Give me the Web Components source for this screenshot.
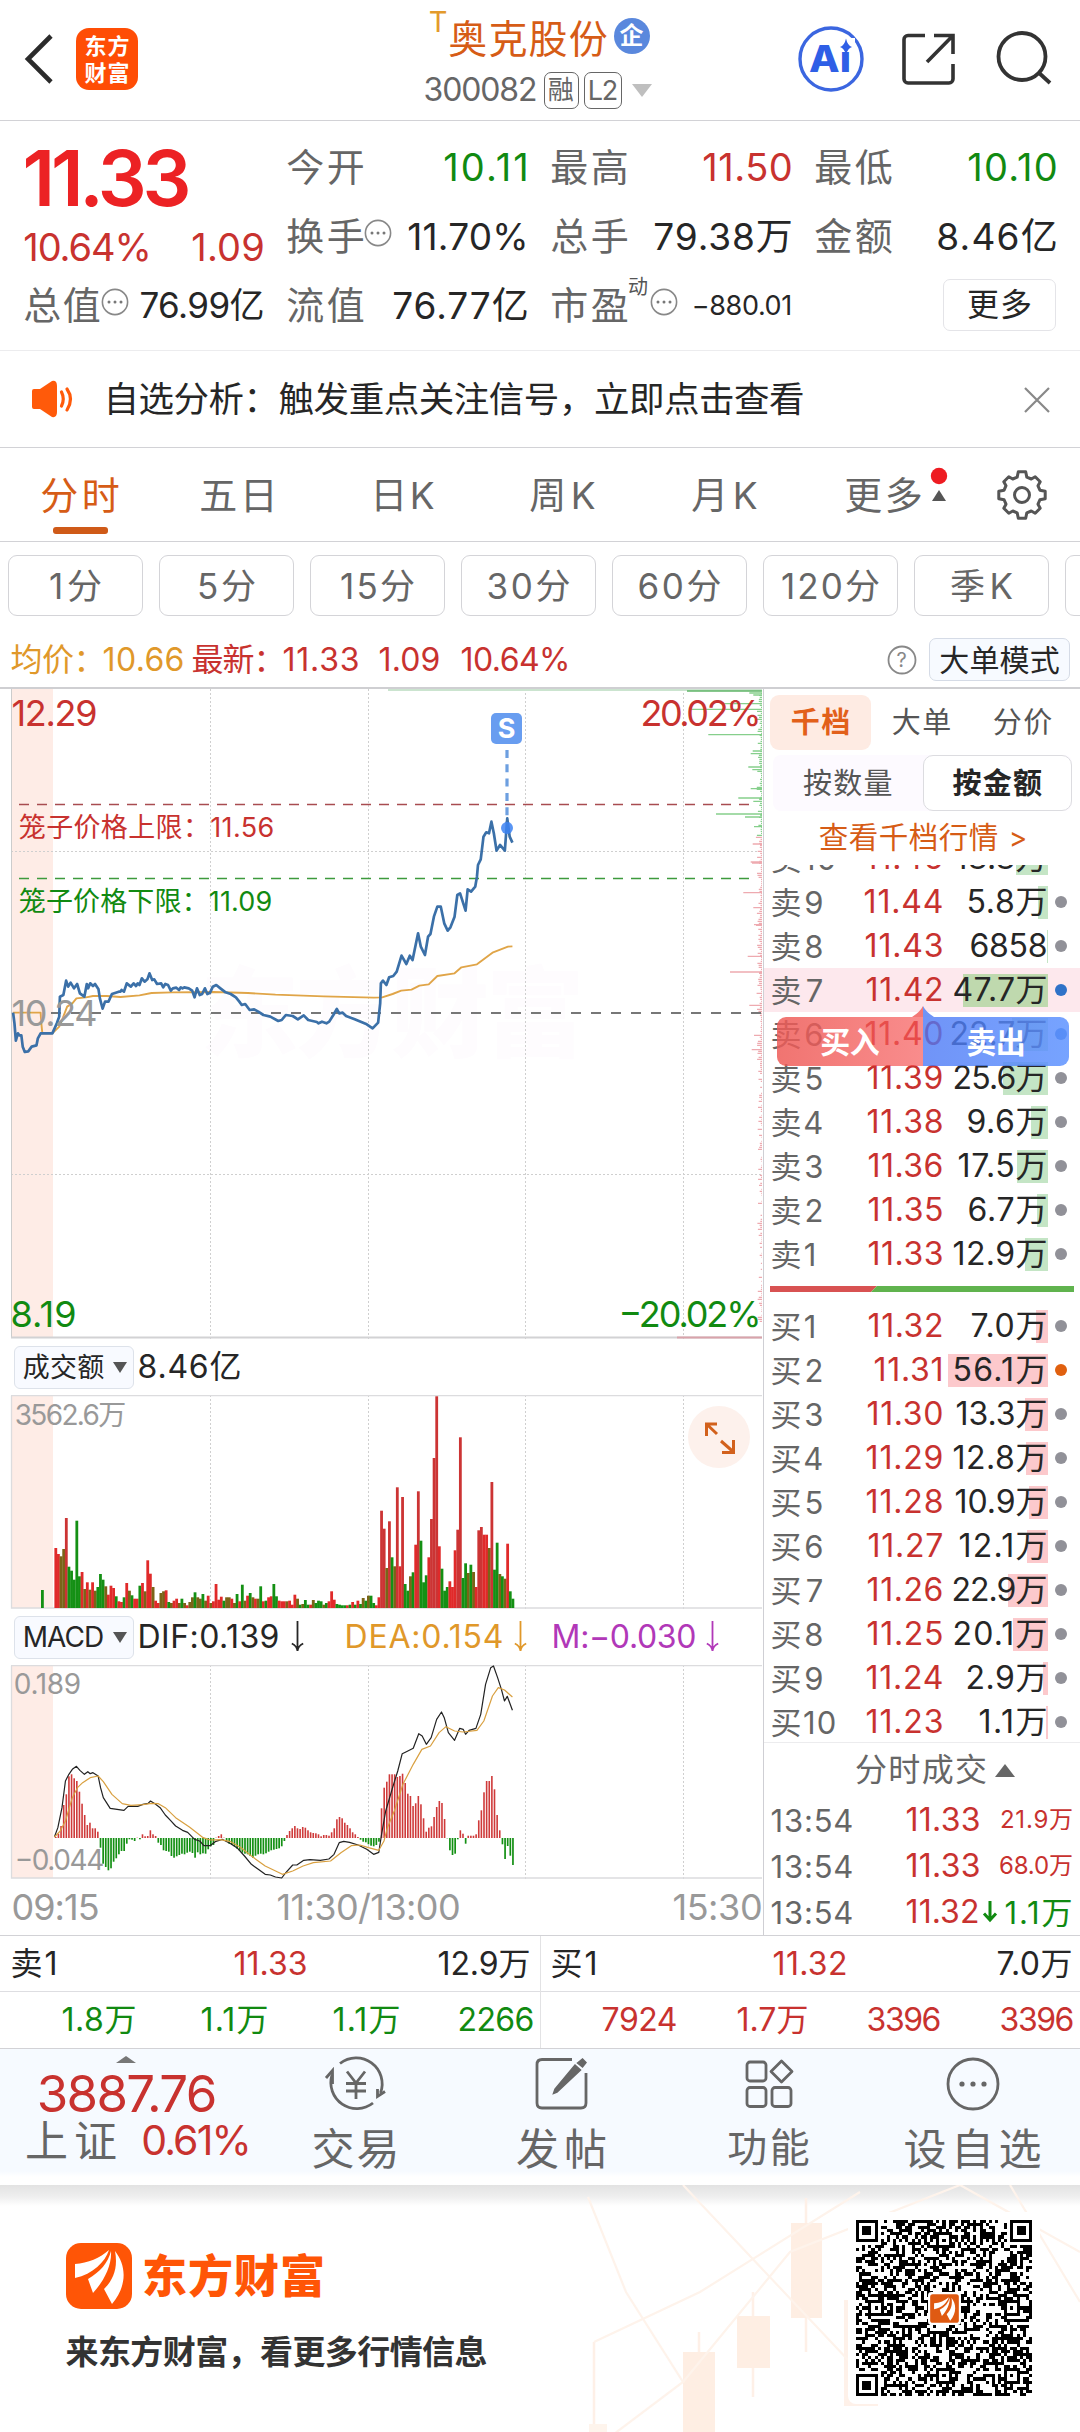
<!DOCTYPE html>
<html lang="zh-CN">
<head>
<meta charset="utf-8">
<title>奥克股份 300082</title>
<style>
html,body{margin:0;padding:0;background:#fff}
body{width:1080px;height:2432px;overflow:hidden;font-family:Inter,"Noto Sans CJK SC",sans-serif;color:#262626;
--up:#c8322f;--down:#118a11;--mut:#666;--line:#d2d2d6;--or:#d65c16}
</style>
</head>
<body>
<stock-page></stock-page>
<script>
const def=(n,c)=>customElements.define(n,c);
class Base extends HTMLElement{
  connectedCallback(){
    if(this.shadowRoot)return;
    this.attachShadow({mode:'open'}).innerHTML='<style>*{box-sizing:border-box}:host{display:block;box-sizing:border-box}svg{display:block;flex:none;overflow:visible}.r{display:flex;align-items:center}'+(this.css?this.css():'')+'</style>'+this.html();
  }
}
/* Label whose ink is spread to an exact width: w = width, s = font size, g = gap before, c = colour, b = weight */
def('fit-label',class extends HTMLElement{
  connectedCallback(){
    if(this.shadowRoot)return;
    const a=n=>this.getAttribute(n),s=+a('s'),w=+a('w');
    this.attachShadow({mode:'open'}).innerHTML=`<style>:host{display:block;flex:none;width:${w}px;margin-left:${a('g')||0}px;font-size:${s}px;line-height:${s}px;height:${s}px;color:${a('c')||'inherit'};font-weight:${a('b')||'inherit'};white-space:nowrap}
    span{display:inline-block;vertical-align:top;line-height:inherit;margin-left:-.045em}</style><span><slot></slot></span>`;
    const sp=this.shadowRoot.querySelector('span'),n=[...this.textContent].length;
    const nat=sp.getBoundingClientRect().width;
    if(n>1)sp.style.letterSpacing=((w+.09*s-nat)/(n-1)).toFixed(3)+'px';
  }
});
const L=(t,w,s,g=0,c='',b='')=>`<fit-label w="${w}" s="${s}" g="${g}"${c?` c="${c}"`:''}${b?` b="${b}"`:''}>${t}</fit-label>`;
const UP='var(--up)',DN='var(--down)',MU='var(--mut)',OR='var(--or)';
/* SVG text with a fixed ink width */
const T=(x,y,w,s,t,f,b=400)=>`<text x="${x-.045*s}" y="${y}" font-size="${s}" font-weight="${b}" fill="${f}" textLength="${(w+.09*s).toFixed(1)}">${t}</text>`;
const dots='<svg width="28" height="28" viewBox="-14 -14 28 28"><circle r="12.6" fill="none" stroke="#888" stroke-width="1.6"/><g fill="#777"><circle cx="-6" r="1.5"/><circle r="1.5"/><circle cx="6" r="1.5"/></g></svg>';
const brand=`<path d="M9 21C22 20 34 15 43 7C39 19 27 31 9 35Z"/><path d="M45 8C46 22 38 38 27 50L22 36C34 29 42 20 45 8Z"/><path d="M49 8C60 22 62 42 46 61L38 46C48 36 52 24 49 8Z"/>`;

def('app-header',class extends Base{
 css(){return `:host{height:121px;border-bottom:1.5px solid var(--line)}.bar{height:118px}
 .logo{width:62px;height:62px;border-radius:13px;background:#ff4d05;color:#fff;margin-left:20px;display:flex;flex-direction:column;align-items:center;justify-content:center;gap:5px}
 .mid{margin-left:287px;width:231px;height:118px;padding-top:12px}.mid .r{height:52px}.t{align-self:flex-start;margin-top:-5px}
 .e{width:36px;height:36px;border-radius:50%;background:#5a88dd;color:#fff;margin:-4px 0 0 8px;display:flex;align-items:center;justify-content:center}
 .bx{height:37px;border:1.6px solid #666;border-radius:7px;display:flex;align-items:center;justify-content:center;color:#666}`}
 html(){return `<div class="r bar"><svg style="margin-left:22px" width="34" height="60" viewBox="22 29 34 60"><path d="M51 36L28 59L51 82" fill="none" stroke="#2b2b2b" stroke-width="4.6"/></svg>
 <div class="logo">${L('东方',43,22,0,'','700')}${L('财富',43,22,0,'','700')}</div>
 <div class="mid"><div class="r"><div class="t">${L('T',17,29,5,'#e39a2c')}</div>${L('奥克股份',156,39,3,OR)}<div class="e">${L('企',23,24,0,'','700')}</div></div>
 <div class="r" style="color:#666">${L('300082',111,32)}<div class="bx" style="width:35px;margin-left:8px">${L('融',25,26)}</div><div class="bx" style="width:38px;margin-left:5px">${L('L2',28,27)}</div><svg style="margin-left:10px" width="20" height="13"><path d="M0 0H20L10 13Z" fill="#bfbfbf"/></svg></div></div>
 <svg style="margin-left:142px" width="66" height="66" viewBox="798 26 66 66"><circle cx="831" cy="59" r="31" fill="none" stroke="#3b66e0" stroke-width="3.4"/><text x="809" y="72" font-size="37" font-weight="800" fill="#2f5fe6" textLength="42" lengthAdjust="spacingAndGlyphs" font-family="Inter">Ai</text><path d="M839 38H855V51H839Z" fill="#fff"/><path d="M846 38.500Q847.500 45.500 852 47Q847.500 48.500 846 55Q844.500 48.500 840 47Q844.500 45.500 846 38.500Z" fill="#2f5fe6"/></svg>
 <svg style="margin-left:35px" width="60" height="60" viewBox="900 29 60 60"><g fill="none" stroke="#333" stroke-width="3.6"><path d="M926 35.500H909a4 4 0 0 0-4 4V79a4 4 0 0 0 4 4H950a4 4 0 0 0 4-4V64"/><path d="M928 62L953 36.500M935 35.500H954V54"/></g></svg>
 <svg style="margin-left:36px" width="60" height="60" viewBox="996 29 60 60"><g fill="none" stroke="#333" stroke-width="3.8"><circle cx="1023" cy="56.500" r="23.500"/><path d="M1039 72L1051 83"/></g></svg></div>`}
});

def('quote-board',class extends Base{
 css(){return `:host{height:230px;border-bottom:1.5px solid #ececee;padding:11.500px 0 0 25px}
 .g{display:grid;grid-template-columns:238px 239px 239px 240px;column-gap:25px;grid-template-rows:69px 69px 69px}
 .c{display:flex;align-items:center}.c>:last-child{margin-left:auto}.big{grid-row:1/3;padding:7px 0 0 1px}.big .r{justify-content:space-between;margin:11px 0 0 -1px}
 .sup{align-self:flex-start;margin-top:6px}.btn{width:113px;height:52px;border:1.6px solid #e4e4e8;border-radius:7px;display:flex;align-items:center;justify-content:center}`}
 html(){const c=(k,kw,x,v)=>`<div class="c">${L(k,kw,38,0,MU)}${x}${v}</div>`;
 return `<div class="g"><div class="big">${L('11.33',162,77,0,'#ec2224','600')}<div class="r">${L('10.64%',125,38,0,UP)}${L('1.09',70,38,0,UP)}</div></div>
 ${c('今开',75,'',L('10.11',82,38,0,DN))}${c('最高',75,'',L('11.50',87,38,0,UP))}${c('最低',75,'',L('10.10',87,38,0,DN))}
 ${c('换手',75,`<div style="margin:-6px 0 0 1px">${dots}</div>`,L('11.70%',118,37))}${c('总手',75,'',L('79.38万',136,37))}${c('金额',75,'',L('8.46亿',118,37))}
 ${c('总值',74,`<div style="margin:-6px 0 0 2px">${dots}</div>`,L('76.99亿',122,35))}${c('流值',75,'',L('76.77亿',133,37))}
 ${c('市盈',75,`<div class="sup">${L('动',19,20,2,'#555')}</div><div style="margin:-6px 0 0 2px">${dots}</div>`,L('−880.01',98,27))}
 <div class="c"><div class="btn">${L('更多',62,32)}</div></div></div>`}
});

def('notice-bar',class extends Base{
 css(){return `:host{height:97px;border-bottom:1.5px solid var(--line);display:flex;align-items:center;padding:1px 30px 0 30px}.x{margin-left:auto}`}
 html(){return `<svg width="44" height="36" viewBox="30 380 44 36"><g fill="#ff5a0a"><path d="M32 389Q32 387 34 387H40L52 379Q57 378 57 384V410Q57 416 52 415L40 407H34Q32 407 32 405Z"/></g><g fill="none" stroke="#ff5a0a" stroke-width="3.200" stroke-linecap="round"><path d="M61.500 390Q65 397 61.500 404"/><path d="M67 387Q74 397 67 408"/></g></svg>
 ${L('自选分析：触发重点关注信号，立即点击查看',698,35.5,31)}<svg class="x" width="26" height="26"><path d="M1 1L25 25M25 1L1 25" stroke="#888" stroke-width="2.200"/></svg>`}
});

def('chart-tabs',class extends Base{
 css(){return `:host{height:94px;border-bottom:1.5px solid var(--line);color:#666}.r{height:94px;position:relative;padding-left:42px}
 .on{display:flex;flex-direction:column;align-items:center;padding-top:28px;align-self:flex-start}.on i{width:55px;height:7px;border-radius:3px;background:#cf5a18;margin-top:13px}
 .mk{width:18px;height:94px;margin-left:9px}`}
 html(){const cog=[];for(let i=0;i<8;i++){const a=i*45-90,p=(r,d)=>{const t=(a+d)*Math.PI/180;return (r*Math.cos(t)).toFixed(1)+' '+(r*Math.sin(t)).toFixed(1)};const R=i%2?22.5:23.5;cog.push(p(18.5,-15),p(R,-9),p(R,9),p(18.5,15))}
 return `<div class="r"><div class="on">${L('分时',76,38,0,OR)}<i></i></div>${L('五日',75,38,83)}${L('日K',61,37,96)}${L('周K',63,37,98)}${L('月K',63,37,99)}${L('更多',75,38,90)}
 <svg class="mk" viewBox="931 447 18 94"><circle cx="940" cy="475" r="8.200" fill="#ee1c22"/><path d="M933 500L940 489L947 500Z" fill="#555"/></svg>
 <svg style="margin-left:48px" width="52" height="52" viewBox="-26 -26 52 52"><path d="M${cog.join('L')}Z" fill="none" stroke="#555" stroke-width="3" stroke-linejoin="round"/><circle r="7.500" fill="none" stroke="#555" stroke-width="3"/></svg></div>`}
});

def('period-chips',class extends Base{
 css(){return `:host{height:81px;padding:13px 0 0 8px;overflow:hidden}.w{display:flex;gap:16px;width:1230px}.c{width:135px;height:61px;border:1.600px solid #d4d4d8;border-radius:9px;display:flex;align-items:center;justify-content:center;color:#666;padding-top:1.500px}`}
 html(){return `<div class="w">${[['1分',50],['5分',56],['15分',72],['30分',81],['60分',81],['120分',96],['季K',60]].map(a=>`<div class="c">${L(a[0],a[1],35)}</div>`).join('')}<div class="c"></div></div>`}
});

def('price-info',class extends Base{
 css(){return `:host{height:66px;border-bottom:2px solid #cfcfd2;display:flex;align-items:center;padding:9px 10px 0 12px}.q{margin-left:auto}
 .b{width:141px;height:43px;border:1.500px solid #d5dbe6;border-radius:7px;background:#f7faff;margin-left:12px;display:flex;align-items:center;justify-content:center}`}
 html(){return `${L('均价：',92,32,0,'#e0982a')}${L('10.66',79,32,0,'#e0982a')}${L('最新：',91,32,10,UP)}${L('11.33',74,32,0,UP)}${L('1.09',59,32,22,UP)}${L('10.64%',107,32,23,UP)}
 <svg class="q" width="30" height="30" viewBox="-15 -15 30 30"><circle r="13.500" fill="none" stroke="#888" stroke-width="1.800"/><text x="-5.500" y="7" font-size="20" fill="#888">?</text></svg><div class="b">${L('大单模式',118,30)}</div>`}
});

const VG='<path d="M210.500 0V700M368.500 0V700M525.500 0V700M683.500 0V700" stroke="#cfcfcf" stroke-dasharray="2 2" fill="none"/>';
const clip=(id,h)=>`<clipPath id="${id}"><rect width="763" height="${h}"/></clipPath>`;

def('price-chart',class extends Base{
 html(){
  const fix=[[8,1108],[14,1120],[40,1030],[57,930],[133,985],[182,1118],[190,1112],[230,1105],[238,1117],[295,1112],[323,1075],[333,1120],[371,1008],[380,1095],[409,1122],[461,1118],[515,1112],[518,1116],[607,1090],[652,1120],[703,1122],[798,1103],[845,1050],[945,1108],[1035,1122],[1078,1115]];
  let g='',r='',s=7;const rnd=()=>(s=(s*16807)%2147483647)/2147483647;
  for(let y=4;y<1900;y+=6){const w=(rnd()*rnd()*14+(y>1150?1:2))/3*1.2,p=`M762 ${(y/3+1).toFixed(1)}h-${w.toFixed(1)}`;if(y<440)g+=p;else if(rnd()>(y>1150?.35:0))r+=p}
  fix.forEach(([y,x])=>{const p=`M762 ${(y/3+1.3).toFixed(1)}H${(380+x/3).toFixed(1)}`;if(y<440)g+=p;else r+=p});
  return `<svg width="763" height="650" viewBox="0 0 763 650"><defs>${clip('k',650)}</defs><g clip-path="url(#k)">
  <rect x="11" width="42" height="649" fill="#feece6"/>${T(205,360,375,98,'东方财富','#fefcfe',900)}
  ${VG}<path d="M11 162.500H762M11 485.500H762" stroke="#cfcfcf" stroke-dasharray="2 2"/>
  <path d="M388 0.500H762" stroke="#cbe4cf" stroke-width="3"/><path d="M687 2H762" stroke="#5fb567" stroke-width="1.500"/>
  <path d="${g}" stroke="#86cf8c" stroke-width="1.300"/><path d="${r}" stroke="#eeaab0" stroke-width="1.300"/>
  <path d="M11.500 0V649" stroke="#ccc"/><path d="M11 648.500H762" stroke="#d2d2d4" stroke-width="2"/><path d="M677 648.500H762" stroke="#d9a3ab" stroke-width="2"/>
  <path d="M19 115.500H750" stroke="#a84c50" stroke-width="1.400" stroke-dasharray="10 8"/><path d="M19 189.500H750" stroke="#3d9a3d" stroke-width="1.400" stroke-dasharray="10 8"/>
  <path d="M51 324H762" stroke="#777" stroke-width="1.800" stroke-dasharray="10 10"/>
  <path d="M507 61V134" stroke="#6d9fe0" stroke-width="3.200" stroke-dasharray="8 6.300"/>
  <g transform="translate(0,1) scale(.34437,.33333)" fill="none" stroke-linejoin="round">
  <polyline vector-effect="non-scaling-stroke" stroke="#e0a548" stroke-width="1.900" points="38,968 118,968 120,1000 123,1030 152,1030 172,1010 182,985 195,950 210,940 222,925 250,922 270,918 310,918 350,921 405,916 440,909 500,907 620,906 720,909 800,914 940,919 1085,923 1110,922 1140,912 1165,902 1195,899 1218,887 1245,883 1270,858 1320,850 1340,832 1385,823 1430,788 1475,770 1488,769"/>
  <polyline vector-effect="non-scaling-stroke" stroke="#3b70a8" stroke-width="2.700" points="38,968 42,1000 46,1052 52,1030 56,1036 62,1036 66,1070 72,1086 82,1084 92,1070 106,1066 110,1045 118,1030 152,1030 165,1000 172,980 174,920 184,915 192,872 198,890 205,878 215,895 224,882 232,910 245,920 252,882 256,895 262,880 270,888 276,882 286,898 290,925 298,956 305,935 315,935 325,912 345,905 350,905 353,900 360,905 368,880 380,890 388,880 395,888 400,880 405,885 412,865 420,875 428,868 434,850 442,870 448,868 456,882 468,880 474,892 480,882 488,885 496,902 502,895 512,893 520,900 525,892 530,895 535,892 548,895 558,902 565,922 572,895 580,915 587,912 595,895 602,912 610,908 618,890 628,885 640,895 655,907 670,912 685,922 695,935 702,945 712,942 725,960 738,958 750,965 765,975 785,980 808,993 818,990 830,975 850,978 865,988 882,976 895,990 920,996 925,1000 935,995 948,1000 956,995 968,975 978,957 985,970 995,968 1005,978 1030,988 1065,1003 1082,1015 1098,998 1104,940 1106,880 1112,872 1122,885 1130,862 1142,858 1152,845 1166,797 1180,822 1190,797 1198,810 1214,730 1222,770 1234,795 1243,740 1250,732 1260,680 1270,650 1280,650 1290,700 1300,722 1308,712 1320,680 1328,615 1336,610 1352,662 1358,598 1368,605 1380,590 1385,560 1388,525 1396,508 1404,440 1412,427 1420,430 1427,395 1434,430 1442,482 1452,465 1466,482 1473,385 1480,440 1488,458"/></g>
  <circle cx="507" cy="139" r="6" fill="#3c82f2" opacity=".85"/>
  <rect x="491" y="24" width="31" height="31" rx="5" fill="#689df0"/><text x="506.500" y="49" text-anchor="middle" font-size="27" font-weight="700" fill="#fff">S</text>
  ${T(13,37,83,36,'12.29',UP)}${T(642,37,118,36,'20.02%',UP)}${T(12,638,63,36,'8.19',DN)}${T(620,638,140,36,'−20.02%',DN)}
  ${T(13,337,83,36,'10.24','#999')}${T(20,148,253,27,'笼子价格上限：11.56',UP)}${T(20,222,251,27,'笼子价格下限：11.09',DN)}</g></svg>`}
});

def('indicator-bar',class extends Base{
 css(){return `:host{height:56px;display:flex;align-items:center;padding:0 0 0 14px}.b{width:120px;height:43px;border:1.400px solid #dde2ea;border-radius:6px;background:#f8faff;display:flex;align-items:center;padding-left:9px}slot{display:contents}`}
 html(){return `<div class="b">${L(this.getAttribute('name'),79,+this.getAttribute('size'))}<svg style="margin-left:10px" width="14" height="11"><path d="M0 0H14L7 11Z" fill="#555"/></svg></div><slot></slot>`}
});

def('volume-chart',class extends Base{
 html(){
  const v='680r698r705b683b590r736g748g775g598g765g752r803b783r805b783r808b797g758g775g795b820r793r800r825g840r842r828g785r808b822g832r832r793g785r810b717r757r797b838r845r815b810b807r842g845b838r832r845b832g845b852r842b828b813g828b832b818g838b823r845b840r788r835r826r838g828b828b832r845b818g840r790g838b823r815g828b832r832b795g840r838g828r825r788g825g838r840r840r840b838r850r820r832b850g848b836g850g850r836b845g838g840g850b845g840r810r835r848g850g852g852g852r850g842r850g838r848g830b838g823b823g845g852r828r568r622r740b600r708g735b498r735r527r788g808g765b753g670r510r658g783g762g708r593r410r225r675r742g808g797g780r797r687r625r348r770g726g755b730g752b797r627r617r640r640r680b482r745g664g758b765g772b667r810g832g'.match(/\d{3}[rgb]/g);
  const C={r:'#e02a2a',g:'#149014',b:'#7a6418'};
  const bars=v.map((t,i)=>{const h=(860-parseInt(t))/3,tall=h>40&&t[3]=='r';return `<rect x="${(54.4+i*2.627).toFixed(2)}" y="${(213-h).toFixed(1)}" width="${t[3]=='b'?2.9:2.8}" height="${h.toFixed(1)}" fill="${tall&&h>75?'#cc3434':C[t[3]]}"/>`}).join('');
  return `<svg width="763" height="214" viewBox="0 0 763 214"><defs>${clip('k',214)}</defs><g clip-path="url(#k)"><rect x="11" width="42" height="213" fill="#feece6"/>${VG}
  <path d="M11.500 .500V213H762M11 .700H762" stroke="#dcdcde" stroke-width="1.300" fill="none"/>${bars}<rect x="41" y="195" width="2.800" height="18" fill="#149014"/>
  <circle cx="719" cy="42" r="31" fill="#fdf1ec"/><g fill="none" stroke="#d2611c" stroke-width="3"><path d="M717 29H706.500V41M706.500 29L717 39M721 46L733.500 57M733.500 45V57.500H722"/></g>
  ${T(16,30,109,28,'3562.6万','#999')}</g></svg>`}
});

def('macd-chart',class extends Base{
 html(){
  const m=[648,638,615,552,520,466,460,472,480,512,548,582,612,605,622,622,632,680,728,738,748,742,722,712,700,690,690,668,655,656,660,650,655,640,646,645,628,640,645,665,672,688,690,692,705,710,706,702,698,700,695,692,696,710,694,700,697,698,685,676,672,650,645,640,650,662,668,672,676,683,690,695,698,700,705,710,704,700,698,700,697,692,688,686,684,682,676,660,642,630,622,615,622,624,618,620,628,634,636,637,640,646,642,642,644,634,622,595,588,592,605,612,622,634,640,648,656,662,664,670,674,676,672,662,562,500,482,460,460,460,468,465,458,486,518,525,555,547,525,550,592,632,620,616,588,558,540,546,594,652,688,702,698,655,628,638,668,644,644,644,640,598,568,514,480,480,465,505,582,628,670,714,675,704,732];
  const z=173;const bars=m.map((t,i)=>{const y=(t-132)/3,x=(55+i*2.627).toFixed(2);return y<z?`<rect x="${x}" y="${y.toFixed(1)}" width="1.600" height="${(z-y).toFixed(1)}" fill="#cf3a3a"/>`:`<rect x="${x}" y="${z}" width="1.700" height="${(y-z).toFixed(1)}" fill="#149014"/>`}).join('');
  return `<svg width="763" height="214" viewBox="0 0 763 214"><defs>${clip('k',214)}</defs><g clip-path="url(#k)"><rect x="11" width="42" height="213" fill="#feece6"/>${VG}
  <path d="M11.500 .500V213H762M11 .700H762" stroke="#dcdcde" stroke-width="1.300" fill="none"/>
  ${T(15,29,65,28,'0.189','#999')}${T(16,205,87,28,'−0.044','#999')}${bars}
  <g transform="translate(0,-44) scale(.34437,.33333)" fill="none" stroke-linejoin="round">
  <polyline vector-effect="non-scaling-stroke" stroke="#222" stroke-width="1.200" points="158,648 168,620 180,560 190,480 200,460 210,445 222,436 232,448 245,460 255,452 262,458 270,455 285,465 292,500 300,530 320,562 360,568 372,556 400,556 415,550 430,547 437,540 450,548 465,560 480,582 495,598 510,615 530,628 545,634 565,655 580,660 592,674 610,674 625,662 645,655 670,668 690,682 710,705 730,730 750,745 770,760 785,762 800,768 818,771 830,755 850,732 862,732 882,718 900,716 930,718 955,714 970,700 985,665 998,661 1015,664 1040,672 1065,685 1085,700 1100,694 1108,640 1120,570 1140,500 1155,450 1168,398 1180,392 1200,382 1216,338 1226,345 1238,370 1252,350 1268,295 1282,273 1290,290 1302,335 1320,358 1335,322 1345,325 1352,340 1362,328 1382,322 1396,280 1410,190 1425,140 1433,135 1445,170 1456,205 1465,240 1473,226 1488,268"/>
  <polyline vector-effect="non-scaling-stroke" stroke="#d9a040" stroke-width="1.200" points="158,648 175,630 190,600 210,530 225,500 240,485 262,470 285,465 300,482 325,520 355,548 380,553 415,551 440,547 460,548 480,560 510,590 550,618 590,650 610,657 640,656 670,662 700,680 730,705 770,735 820,760 850,750 880,735 910,725 960,720 990,695 1020,674 1045,672 1070,680 1100,688 1115,660 1125,620 1145,570 1170,490 1200,430 1225,385 1250,375 1275,335 1295,317 1320,330 1345,333 1385,328 1405,300 1430,225 1447,200 1465,207 1488,228"/></g></g></svg>`}
});

def('time-axis',class extends Base{
 css(){return `:host{height:56px;padding:0 2px 0 13px;color:#999}.r{height:55px}.r>:last-child{margin-left:auto}`}
 html(){return `<div class="r">${L('09:15',85,36)}${L('11:30/13:00',181,36,180)}${L('15:30',87,36)}</div>`}
});

const arrow=(c,g)=>`<svg style="margin-left:${g}px" width="13" height="32"><path d="M6.500 0V29M.800 22.500Q6 25 6.500 30Q7 25 12.200 22.500" fill="none" stroke="${c}" stroke-width="1.800"/></svg>`;
def('chart-column',class extends Base{
 css(){return `:host{width:763px;flex:none}`}
 html(){return `<price-chart></price-chart><indicator-bar name="成交额" size="27">${L('8.46亿',101,32,5)}</indicator-bar><volume-chart></volume-chart>
 <indicator-bar name="MACD" size="28">${L('DIF:0.139',139,32,5)}${arrow('#262626',13)}${L('DEA:0.154',156,32,42,'#e0982a')}${arrow('#e0982a',12)}${L('M:−0.030',142,32,26,'#b138b8')}${arrow('#b138b8',11)}</indicator-bar><macd-chart></macd-chart><time-axis></time-axis>`}
});

/* One depth level: label, price, amount with its bar, and a dot */
def('book-row',class extends Base{
 css(){const a=n=>this.getAttribute(n);return `:host{height:44px;display:flex;align-items:center;padding:0 13px 0 8px;background:${a('hl')?'#fde8ed':'none'}}
 .p{width:77px;display:flex;justify-content:flex-end;margin-left:auto}.a{width:106px;height:33px;display:flex;align-items:center;justify-content:flex-end;padding-right:2px;background:linear-gradient(${a('bar')},${a('bar')}) right/${a('bw')}px 100% no-repeat}
 i{width:12px;height:12px;border-radius:50%;background:${a('dot')||'#919198'};margin-left:7px}`}
 html(){const a=n=>this.getAttribute(n);return `${L(a('k'),a('k').length>2?63:(a('k')[1]=='1'?43:50),31,0,MU)}<div class="p">${L(a('p'),+a('pw'),32,0,UP)}</div><div class="a">${L(a('v'),+a('vw'),32)}</div><i></i>`}
});
def('order-book',class extends Base{
 css(){return `:host{height:1053px;position:relative}.t{display:flex;padding:6px 0 0 6px;height:66px}.t div{width:101px;height:55px;border-radius:9px;display:flex;align-items:center;justify-content:center}.t .on{background:#feebe3}
 .s{display:flex;margin:0 8px 0 9px;height:56px;background:#fdfaff;border-radius:8px;color:#555}.s div{width:150px;display:flex;align-items:center;justify-content:center}.s .on{border:1.500px solid #dcdce0;border-radius:10px;background:#fff;color:#262626}
 .m{height:54px;display:flex;align-items:center;justify-content:center}.sell{height:411px;overflow:hidden;display:flex;flex-direction:column;justify-content:flex-end}.sell book-row{flex:none}
 .ratio{margin:10px 0 12px 6px;display:block}
 .pop{position:absolute;left:13px;top:317px;color:#fff}.pop .r{height:49px;margin-top:11px;border-radius:9px;overflow:hidden;width:292px}.pop .r div{width:146px;height:49px;display:flex;align-items:center;justify-content:center}
 .pop .b{background:linear-gradient(90deg,rgba(238,92,88,.85),rgba(246,86,86,.68))}.pop .c{background:linear-gradient(90deg,rgba(72,118,245,.78),rgba(96,148,255,.86))}.pop svg{position:absolute;left:135px;top:0}`}
 html(){
 const S=[['卖10','11.45',76,'18.8万',90,32],['卖9','11.44',77,'5.8万',78,10],['卖8','11.43',76,'6858',75,1],['卖7','11.42',75,'47.7万',92,85],['卖6','11.40',76,'22.7万',95,36],['卖5','11.39',74,'25.6万',92,45],['卖4','11.38',74,'9.6万',78,17],['卖3','11.36',73,'17.5万',87,31],['卖2','11.35',73,'6.7万',77,11],['卖1','11.33',73,'12.9万',92,23]];
 const B=[['买1','11.32',73,'7.0万',74,12],['买2','11.31',67,'56.1万',92,100],['买3','11.30',74,'13.3万',89,23],['买4','11.29',75,'12.8万',92,22],['买5','11.28',75,'10.9万',90,19],['买6','11.27',73,'12.1万',86,21],['买7','11.26',74,'22.9万',93,40],['买8','11.25',74,'20.1万',92,35],['买9','11.24',75,'2.9万',79,5],['买10','11.23',75,'1.1万',66,2]];
 const row=(r,c)=>`<book-row k="${r[0]}" p="${r[1]}" pw="${r[2]}" v="${r[3]}" vw="${r[4]}" bw="${r[5]}" bar="${r[0]=='卖7'?'#bfd9ae':c}"${r[0]=='卖7'?' hl="1" dot="#2f72c8"':r[0]=='卖6'?' dot="#2f72c8"':r[0]=='买2'?' dot="#e0600f"':''}></book-row>`;
 return `<div class="t"><div class="on">${L('千档',57,29,0,'#e2601a','700')}</div><div>${L('大单',57,29,0,'#555')}</div><div>${L('分价',57,29,0,'#555')}</div></div>
 <div class="s"><div>${L('按数量',87,29)}</div><div class="on">${L('按金额',87,29,0,'','700')}</div></div>
 <div class="m">${L('查看千档行情',177,29.5,0,OR)}${L('&gt;',14,28,13,OR)}</div>
 <div class="sell">${S.map(r=>row(r,'#c4e5c5')).join('')}</div>
 <svg class="ratio" width="304" height="6"><path d="M0 0H107L101 6H0Z" fill="#d85252"/><path d="M107 0H304V6H101Z" fill="#60b34e"/></svg>
 ${B.map(r=>row(r,'#fcc9cc')).join('')}
 <div class="pop"><svg width="22" height="11"><path d="M11 0V11H0Q8 6 11 0Z" fill="#f37876"/><path d="M11 0V11H22Q14 6 11 0Z" fill="#6f94f6"/></svg><div class="r"><div class="b">${L('买入',57,30,0,'','700')}</div><div class="c">${L('卖出',57,30,0,'','700')}</div></div></div>`}
});
def('trade-ticks',class extends Base{
 css(){return `:host{height:192px;border-top:1.500px solid #ececee;padding:0 10px 0 8px}.h{height:54px;display:flex;align-items:center;justify-content:center;padding-left:29px}.x{height:46px;display:flex;align-items:center}`}
 html(){const x=(pw,b)=>`<div class="x">${L('13:54',80,31,0,MU)}${L(pw==72?'11.33':'11.32',pw,32,55,UP)}${b}</div>`;
 return `<div class="h">${L('分时成交',129,32,0,MU)}<svg style="margin-left:9px" width="20" height="13"><path d="M0 13L10 0L20 13Z" fill="#666"/></svg></div>
 ${x(72,L('21.9万',71,24,22,UP))}${x(72,L('68.0万',72,24,21,UP))}${x(71,`<svg style="margin-left:5px" width="14" height="22"><path d="M7 0V19M1 12.500L7 19L13 12.500" fill="none" stroke="#118a11" stroke-width="3"/></svg>${L('1.1万',65,31,9,DN)}`)}`}
});
def('side-panel',class extends Base{
 css(){return `:host{width:317px;border-left:1.500px solid #cfcfd4;flex:none}`}
 html(){return `<order-book></order-book><trade-ticks></trade-ticks>`}
});

def('depth-strip',class extends Base{
 css(){return `:host{height:114px;border-top:1.500px solid var(--line);border-bottom:1.500px solid var(--line);display:flex}.h{width:540px}.h+.h{border-left:1px solid #e2e2e4}
 .a{height:56px;border-bottom:1.500px solid #dedee2;display:flex;align-items:center}.b{height:56px;display:flex;align-items:center}`}
 html(){return `<div class="h"><div class="a">${L('卖1',44,32,12)}${L('11.33',71,32,179,UP)}${L('12.9万',90,32,133)}</div><div class="b">${L('1.8万',72,32,63,DN)}${L('1.1万',65,32,67,DN)}${L('1.1万',65,32,67,DN)}${L('2266',74,32,60,DN)}</div></div>
 <div class="h"><div class="a">${L('买1',44,32,11)}${L('11.32',72,32,178,UP)}${L('7.0万',73,32,152)}</div><div class="b">${L('7924',73,32,62,UP)}${L('1.7万',69,32,62,UP)}${L('3396',72,32,61,UP)}${L('3396',72,32,61,UP)}</div></div>`}
});

def('bottom-nav',class extends Base{
 css(){return `:host{height:136px;display:flex;background:linear-gradient(#f6faff 0 122px,#fff 128px);color:#666}.i{flex:none;padding:7px 0 0 27px;width:260px;height:136px}.i .r{margin-top:1px;align-items:flex-start}
 .n{flex:none;display:flex;flex-direction:column;align-items:center;padding-top:7px}.n svg{margin-bottom:16px}`}
 html(){const n=(W,t,w,s,p)=>`<div class="n" style="width:${W}px"><svg width="64" height="56" viewBox="-32 -28 64 56"><g fill="none" stroke="#666" stroke-width="2.800">${p}</g></svg>${L(t,w,s)}</div>`;
 return `<div class="i"><svg style="margin-left:89px" width="20" height="7"><path d="M0 7L10 0L20 7Z" fill="#777"/></svg><div style="margin:5px 0 0 12px">${L('3887.76',176,51,0,UP)}</div><div class="r">${L('上证',88,43)}${L('0.61%',107,41,28,UP)}</div></div>
 ${n(191,'交易',84,43,'<path d="M-16 -20.500A26 26 0 0 1 24.500 9M17 19A26 26 0 0 1 -24 -9"/><path d="M-30 -6L-23.500 -13.500V0M21.500 5V12.500L29 7.500"/><path d="M-9 -12.500L0 -1L9 -12.500M0 -1V15M-10 -.500H10M-10 7H10"/>')}
 ${n(221,'发帖',87,43,'<path d="M10 -24.500H-20Q-25 -24.500 -25 -19.500V19Q-25 24 -20 24H19Q24 24 24 19V-11"/><path d="M13 -19L18.500 -14L-5 8L-8.500 9.500L-7 5Z" fill="#666" stroke-width="1.500"/><path d="M15.500 -21L20.500 -25L24 -21.500L20.500 -17Z" fill="#666" stroke-width="1.500"/>')}
 ${n(193,'功能',79,40,'<rect x="-22" y="-22" width="19" height="19" rx="3"/><rect x="-22" y="3.500" width="19" height="19" rx="3"/><rect x="3" y="3.500" width="19" height="19" rx="3"/><path stroke-linejoin="round" d="M12.500 -23L23 -12.500L12.500 -2L2 -12.500Z"/>')}
 ${n(215,'设自选',134,43,'<circle r="25"/><g fill="#666" stroke="none"><circle cx="-11" r="2.600"/><circle r="2.600"/><circle cx="11" r="2.600"/></g>')}`}
});

def('qr-code',class extends Base{
 css(){return `:host{width:192px;height:192px;background:#fff;border-radius:8px;padding:8px}`}
 html(){
  const N=57,A=[6,28,50];let s=20251,d='';const rnd=()=>(s=(s*48271)%2147483647)/2147483647;
  const ring=(x,y,cx,cy,r)=>{const k=Math.max(Math.abs(x-cx),Math.abs(y-cy));return k>r?null:(k!=1)};
  for(let y=0;y<N;y++)for(let x=0;x<N;x++){
   let v=rnd()>.5,done=false;
   for(const [cx,cy] of [[3,3],[N-4,3],[3,N-4]]){const k=Math.max(Math.abs(x-cx),Math.abs(y-cy));if(k<=4){v=k!=4&&k!=2;done=true}}
   if(!done)for(const ax of A)for(const ay of A){if((ax==6&&ay==6)||(ax==6&&ay==50)||(ax==50&&ay==6))continue;const q=ring(x,y,ax,ay,2);if(q!==null){v=q;done=true}}
   if(!done&&(x==6||y==6))v=(x+y)%2==0;
   if(v)d+=`M${x} ${y}h1v1h-1z`;
  }
  return `<svg width="176" height="176" viewBox="0 0 57 57" shape-rendering="crispEdges"><path d="${d}" fill="#000"/></svg>`}
});
def('brand-footer',class extends Base{
 css(){return `:host{height:249px;position:relative;background:linear-gradient(#e2e2e2,#efefef 12px,#fff 21px);overflow:hidden}.bg{position:absolute;left:560px;top:0}.w{display:flex;position:relative;padding:27px 40px 0 66px;justify-content:space-between}
 .l{padding-top:31px}.s{margin-top:27px}.qr{position:relative}.qr>svg{position:absolute;left:80px;top:80px}`}
 html(){return `<svg class="bg" width="520" height="249" viewBox="560 2183 520 249"><g fill="#feeee3"><rect x="683" y="2350" width="32" height="82"/><rect x="737" y="2314" width="33" height="52"/><rect x="791" y="2221" width="31" height="95"/><rect x="844" y="2298" width="34" height="106" opacity=".8"/></g>
 <path d="M699 2330V2350M753 2290V2314M753 2366V2395M806 2196V2221M806 2316V2350M594 2340V2422" stroke="#fef0e7" stroke-width="2.500" fill="none"/><path d="M589 2422H607V2432H589Z" fill="#fef4ec"/><g fill="none" stroke="#fef3eb" stroke-width="2.200"><path d="M588 2195L626 2290L683 2380L614 2432"/><path d="M594 2340L700 2290L860 2190"/><path d="M683 2183L850 2360M683 2380L790 2250L960 2183M960 2183L1080 2250M1010 2183L1080 2300"/></g></svg>
 <div class="w"><div class="l"><div class="r"><svg width="66" height="66" viewBox="0 0 66 66"><rect width="66" height="66" rx="15" fill="#ff5506"/><g fill="#fff">${brand}</g></svg>${L('东方财富',179,45,12,'#ff5506','900')}</div><div class="s">${L('来东方财富，看更多行情信息',419,33,1,'#333','700')}</div></div>
 <div class="qr"><qr-code></qr-code><svg width="33" height="33" viewBox="-5 -5 76 76"><rect x="-5" y="-5" width="76" height="76" rx="8" fill="#fff"/><rect width="66" height="66" rx="6" fill="#df5a12"/><g fill="#fff">${brand}</g></svg></div></div>`}
});
def('stock-page',class extends Base{
 css(){return `:host{width:1080px;background:#fff}.body{display:flex;height:1246px}`}
 html(){return `<app-header></app-header><quote-board></quote-board><notice-bar></notice-bar><chart-tabs></chart-tabs><period-chips></period-chips><price-info></price-info><div class="body"><chart-column></chart-column><side-panel></side-panel></div><depth-strip></depth-strip><bottom-nav></bottom-nav><brand-footer></brand-footer>`}
});
</script>
</body>
</html>
